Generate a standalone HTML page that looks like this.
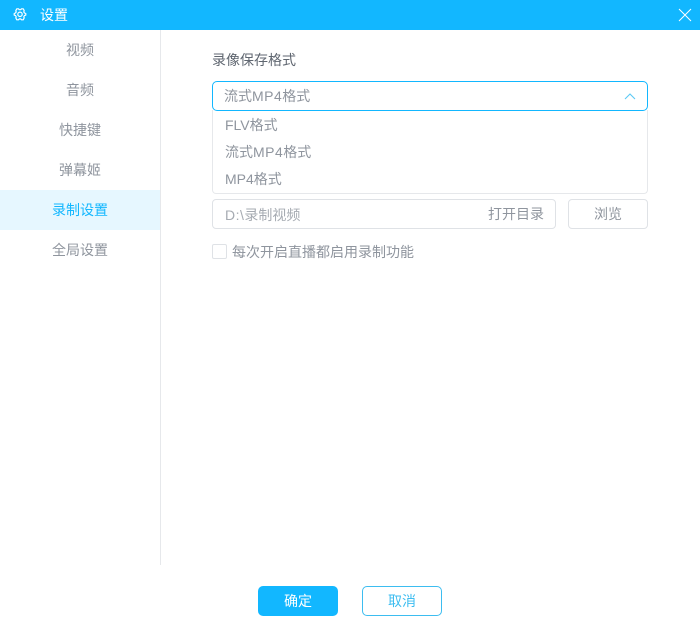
<!DOCTYPE html>
<html lang="zh">
<head>
<meta charset="utf-8">
<style>
html,body{margin:0;padding:0;width:700px;height:640px;overflow:hidden;background:#fff}
body{position:relative;font-family:"Liberation Sans","Noto Sans CJK SC",sans-serif;font-size:14px;color:#8f959e}
div,span{position:absolute;box-sizing:border-box;white-space:nowrap}
i{font-style:normal;letter-spacing:.5px}
.t{line-height:20px}
.nav{left:0;width:160px;height:40px;line-height:40px;text-align:center}
.box{border:1px solid #dfe2e6;border-radius:4px}
</style>
</head>
<body>
<div style="left:0;top:0;width:700px;height:30px;background:#12b7ff"></div>
<svg style="position:absolute;left:12px;top:7px" width="16" height="16" viewBox="0 0 16 16" fill="none" stroke="#fff" stroke-width="1.2">
<path d="M4.800 1.800h1.700l.8.900h1.400l.8-.900h1.700l1 1.900-.4 1.200.7 1.100 1.300.5v1.600l-1.300.5-.7 1.100.4 1.200-1 1.900H9.500l-.8-.9H7.300l-.8.900H4.800l-1-1.900.4-1.200-.7-1.100-1.300-.5V6.500l1.300-.5.700-1.100-.4-1.200z" stroke-linejoin="round"/>
<circle cx="8" cy="7.300" r="2.200"/>
</svg>
<div class="t" style="left:40px;top:5px;color:#fff">设置</div>
<svg style="position:absolute;left:678px;top:8px" width="14" height="14" viewBox="0 0 14 14" fill="none" stroke="#fff" stroke-width="1"><path d="M1 1l12 12M13 1L1 13"/></svg>

<div style="left:160px;top:30px;width:1px;height:535px;background:#e6e8eb"></div>
<div class="nav" style="top:30px">视频</div>
<div class="nav" style="top:70px">音频</div>
<div class="nav" style="top:110px">快捷键</div>
<div class="nav" style="top:150px">弹幕姬</div>
<div class="nav" style="top:190px;background:#e6f7ff;color:#12b7ff">录制设置</div>
<div class="nav" style="top:230px">全局设置</div>

<div class="t" style="left:212px;top:50px;font-size:14px;color:#5f6670">录像保存格式</div>

<div style="left:212px;top:110px;width:436px;height:84px;border:1px solid #e6e8eb;border-top:0;border-radius:0 0 4px 4px"></div>
<div style="left:212px;top:81px;width:436px;height:30px;border:1px solid #12b7ff;border-radius:5px;background:#fff"></div>
<div class="t" style="left:224px;top:86px">流式<i>MP4</i>格式</div>
<svg style="position:absolute;left:623px;top:91px" width="14" height="10" viewBox="0 0 14 10" fill="none" stroke="#5cc9f5" stroke-width="1.1"><path d="M2 8L7 3 12 8"/></svg>
<div class="t" style="left:225px;top:115px">FLV格式</div>
<div class="t" style="left:225px;top:142px">流式<i>MP4</i>格式</div>
<div class="t" style="left:225px;top:169px">MP4格式</div>

<div class="box" style="left:212px;top:199px;width:344px;height:30px"></div>
<div class="t" style="left:225px;top:205px;color:#a6abb2"><i>D:\</i>录制视频</div>
<div class="t" style="left:488px;top:204px">打开目录</div>
<div class="box" style="left:568px;top:199px;width:80px;height:30px;line-height:28px;text-align:center">浏览</div>

<div style="left:212px;top:244px;width:15px;height:15px;border:1px solid #dfe2e6;border-radius:2px"></div>
<div class="t" style="left:232px;top:242px">每次开启直播都启用录制功能</div>

<div style="left:258px;top:586px;width:80px;height:30px;background:#12b7ff;border-radius:5px;color:#fff;line-height:30px;text-align:center">确定</div>
<div style="left:362px;top:586px;width:80px;height:30px;border:1px solid #3dbdf0;border-radius:5px;color:#3dbdf0;line-height:28px;text-align:center">取消</div>
</body>
</html>
